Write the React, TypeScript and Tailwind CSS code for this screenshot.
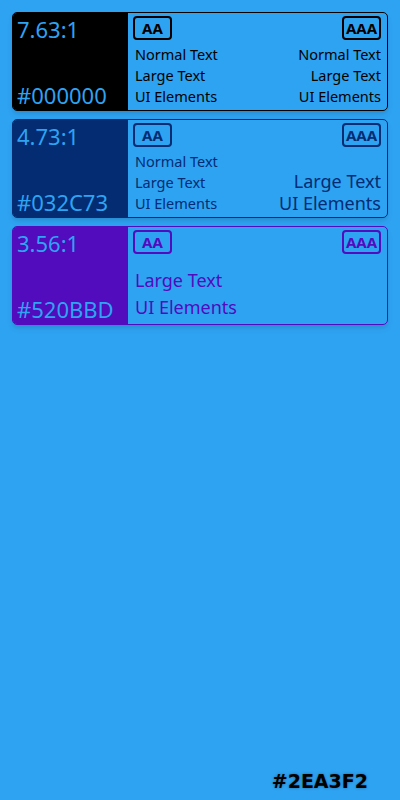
import React from "react";

type Item = { label: string; big?: boolean };
type Card = {
  ratio: string;
  hex: string;
  text: string;
  bg: string;
  border: string;
  aa: Item[];
  aaa: Item[];
  aaLead: string;
  aaaLead: string;
};

const cards: Card[] = [
  {
    ratio: "7.63:1",
    hex: "#000000",
    text: "text-[#000000]",
    bg: "bg-[#000000]",
    border: "border-[#000000]",
    aa: [{ label: "Normal Text" }, { label: "Large Text" }, { label: "UI Elements" }],
    aaa: [{ label: "Normal Text" }, { label: "Large Text" }, { label: "UI Elements" }],
    aaLead: "leading-[21px]",
    aaaLead: "leading-[21px]",
  },
  {
    ratio: "4.73:1",
    hex: "#032C73",
    text: "text-[#032C73]",
    bg: "bg-[#032C73]",
    border: "border-[#032C73]",
    aa: [{ label: "Normal Text" }, { label: "Large Text" }, { label: "UI Elements" }],
    aaa: [
      { label: "Large Text", big: true },
      { label: "UI Elements", big: true },
    ],
    aaLead: "leading-[21px]",
    aaaLead: "leading-[22px]",
  },
  {
    ratio: "3.56:1",
    hex: "#520BBD",
    text: "text-[#520BBD]",
    bg: "bg-[#520BBD]",
    border: "border-[#520BBD]",
    aa: [
      { label: "Large Text", big: true },
      { label: "UI Elements", big: true },
    ],
    aaa: [],
    aaLead: "leading-[27px]",
    aaaLead: "leading-[27px]",
  },
];

function Badge({ text, c }: { text: string; c: Card }) {
  return (
    <div
      className={`w-[39px] h-[24px] border-2 rounded-[4px] flex items-center justify-center font-bold text-[15px] leading-none ${c.border} ${c.text}`}
    >
      {text}
    </div>
  );
}

function Column({
  badge,
  items,
  c,
  align,
  lead,
}: {
  badge: string;
  items: Item[];
  c: Card;
  align: "start" | "end";
  lead: string;
}) {
  return (
    <div className={`flex flex-col ${align === "start" ? "items-start" : "items-end"}`}>
      <Badge text={badge} c={c} />
      <div
        className={`flex-1 flex flex-col justify-end ${align === "start" ? "items-start pl-[2px]" : "items-end"}`}
      >
        {items.map((it) => (
          <div
            key={it.label}
            className={`${it.big ? "text-[18px]" : "text-[14.5px]"} ${lead} ${c.text} whitespace-nowrap`}
          >
            {it.label}
          </div>
        ))}
      </div>
    </div>
  );
}

function ContrastCard({ c }: { c: Card }) {
  return (
    <div className={`flex h-[99px] border rounded-[5px] overflow-hidden shadow-md ${c.border}`}>
      <div
        className={`w-[115px] shrink-0 flex flex-col justify-between pl-1 pt-px text-[22px] leading-[30px] text-[#2EA3F2] ${c.bg}`}
      >
        <div>{c.ratio}</div>
        <div>{c.hex}</div>
      </div>
      <div className="flex-1 flex justify-between pl-[5px] pr-[6px] pt-[3px] pb-[3px]">
        <Column badge="AA" items={c.aa} c={c} align="start" lead={c.aaLead} />
        <Column badge="AAA" items={c.aaa} c={c} align="end" lead={c.aaaLead} />
      </div>
    </div>
  );
}

export default function App() {
  return (
    <div className="min-h-[800px] w-full bg-[#2EA3F2] flex flex-col pt-3 px-3 pb-[8px] font-['Noto_Sans','Open_Sans',sans-serif]">
      <div className="flex flex-col gap-2">
        {cards.map((c) => (
          <ContrastCard key={c.hex} c={c} />
        ))}
      </div>
      <div className="mt-auto flex justify-end pr-5">
        <div className="text-[19px] font-bold text-black leading-[22px] font-['DejaVu_Sans',sans-serif] [text-shadow:0_0_3px_rgba(0,0,0,0.35)]">
          #2EA3F2
        </div>
      </div>
    </div>
  );
}
